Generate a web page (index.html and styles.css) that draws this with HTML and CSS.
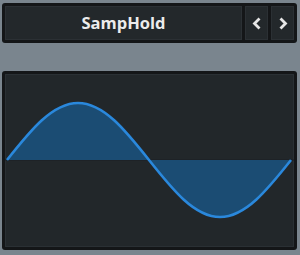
FILE: index.html
```
<!DOCTYPE html>
<html>
<head>
<meta charset="utf-8">
<link rel="stylesheet" href="styles.css">
</head>
<body>
	<div class="bar">
		<div class="name">SampHold</div>
		<div class="btn">
			<svg width="10" height="13" viewBox="0 0 10 13"><polyline points="7.5,1.5 2.5,6.5 7.5,11.5" /></svg>
		</div>
		<div class="btn">
			<svg width="10" height="13" viewBox="0 0 10 13"><polyline points="2.5,1.5 7.5,6.5 2.5,11.5" /></svg>
		</div>
	</div>
	<div class="panel">
		<div class="screen">
			<svg class="wave" width="289" height="173" viewBox="0 0 289 173">
				<line class="axis" x1="0" y1="86" x2="289" y2="86" />
				<path class="area" d="M2,86 C25.74,56.07 47.5,29 73,29 C98.5,29 120.26,56.07 144,86 C167.74,115.93 189.5,143 215,143 C240.5,143 262.26,115.93 286,86 Z" />
				<path class="line" d="M2,86 C25.74,56.07 47.5,29 73,29 C98.5,29 120.26,56.07 144,86 C167.74,115.93 189.5,143 215,143 C240.5,143 262.26,115.93 286,86" />
			</svg>
		</div>
	</div>
</body>
</html>
```

FILE: styles.css
```
html,body{margin:0;height:100%}
body {background:#7a858e;font-family:"Open Sans","Liberation Sans",sans-serif}
.bar {
	display:flex;gap:3px;
	height:34px;
	margin:3px 3px 0 2px;
	padding:3px;
	background:#141618;
	border-radius:3px;
}
.bar .name {
	flex:1;
	background:#23282b;
	color:#ececec;
	font-weight:bold;
	font-size:16.5px;
	line-height:34px;
	text-align:center;
	box-shadow:inset 0 0 0 1px #2b3034;
}
.bar .btn {
	width:23px;
	display:flex;align-items:center;justify-content:center;
	background:#23282b;
	box-shadow:inset 0 0 0 1px #2b3034;
}
.bar .btn polyline {
	fill:none;stroke:#e6e6e6;stroke-width:2.8;
}
.panel {
	margin:28px 3px 0 2px;
	padding:3px;
	background:#141618;
	border-radius:3px;
}
.screen {
	height:173px;
	background:#22272a;
	box-shadow:inset 0 0 0 1px #2a3034;
}
.wave {display:block}
.wave .axis {stroke:#1a1f22;stroke-width:1}
.wave .area {fill:#1b4c73}
.wave .line {fill:none;stroke:#2a88dc;stroke-width:2.6}
```
